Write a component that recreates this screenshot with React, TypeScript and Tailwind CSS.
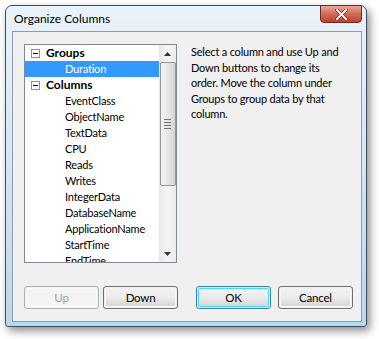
import React from "react";

const font = { fontFamily: '"Segoe UI", Lato, "Noto Sans", sans-serif' };

const items = [
  "EventClass",
  "ObjectName",
  "TextData",
  "CPU",
  "Reads",
  "Writes",
  "IntegerData",
  "DatabaseName",
  "ApplicationName",
  "StartTime",
  "EndTime",
];

function Expander() {
  return (
    <div className="w-[9px] h-[9px] shrink-0 border border-[#919191] bg-white flex items-center justify-center">
      <div className="w-[5px] h-px bg-black" />
    </div>
  );
}

function Btn({ label, disabled, def }: { label: string; disabled?: boolean; def?: boolean }) {
  return (
    <div
      className={`w-[75px] h-[23px] rounded-[3px] border ${
        disabled ? "border-[#adb2b5]" : def ? "border-[#3c7fb1]" : "border-[#707070]"
      } p-px`}
    >
      <div
        className={`w-full h-full rounded-[2px] flex items-center justify-center text-[11.5px] tracking-[-0.2px] ${
          disabled ? "text-[#a0a0a0] bg-[#f4f4f4]" : "text-black bg-gradient-to-b from-[#f2f2f2] via-[#ebebeb] to-[#d6d6d6]"
        } ${def ? "border border-[#48d8fb]" : "border border-[#fcfcfc]/70"}`}
      >
        {label}
      </div>
    </div>
  );
}

export default function App() {
  return (
    <div className="w-[379px] h-[339px] bg-white relative overflow-hidden" style={font}>
      <div className="ml-[5px] mt-[5px] w-[362px] h-[322px] rounded-t-[7px] rounded-b-[3px] border border-[#3d4f62] bg-gradient-to-b from-[#eaf2f9] via-[#d4e5f3] to-[#bcd6ec] shadow-[3px_4px_8px_rgba(0,0,0,0.45)] flex flex-col relative">
        <div className="h-[25px] flex items-center pl-[8px] text-[12px] text-black">
          Organize Columns
        </div>
        <div className="absolute right-[4px] top-[-1px] w-[42px] h-[18px] rounded-b-[4px] border border-[#6d2b22] bg-gradient-to-b from-[#e6a99c] via-[#d26a56] to-[#c0412b] flex items-center justify-center">
          <svg width="13" height="11" viewBox="0 0 13 11">
            <path d="M2 1 L11 10 M11 1 L2 10" stroke="#5a1a12" strokeWidth="3.2" strokeLinecap="square" />
            <path d="M2 1 L11 10 M11 1 L2 10" stroke="#ffffff" strokeWidth="2" strokeLinecap="square" />
          </svg>
        </div>
        <div className="ml-[6px] mr-[4px] mb-[4px] flex-1 border border-[#8c9cae] bg-[#f0f0f0] relative flex flex-col shadow-[0_1px_0_#a8dcf3]">
          <div className="flex pt-[12px] pl-[11px]">
            <div className="w-[153px] h-[219px] border border-[#828790] bg-white flex overflow-hidden">
              <div className="flex-1 flex flex-col text-[11px] tracking-[-0.2px] text-black overflow-hidden">
                <div className="h-[16px] shrink-0 flex items-center pl-[6px] gap-[6px]">
                  <Expander />
                  <span className="font-bold text-[12px] tracking-normal">Groups</span>
                </div>
                <div className="h-[16px] shrink-0 flex items-center pl-[40px] bg-[#3399ff] text-white">Duration</div>
                <div className="h-[16px] shrink-0 flex items-center pl-[6px] gap-[6px]">
                  <Expander />
                  <span className="font-bold text-[12px] tracking-normal">Columns</span>
                </div>
                {items.map((t) => (
                  <div key={t} className="h-[16px] shrink-0 flex items-center pl-[40px]">
                    {t}
                  </div>
                ))}
              </div>
              <div className="w-[17px] h-full shrink-0 bg-gradient-to-r from-[#e8e8e8] via-[#f4f4f4] to-[#ececec] flex flex-col items-center">
                <div className="h-[17px] w-full flex items-center justify-center">
                  <svg width="7" height="4" viewBox="0 0 7 4"><path d="M0 4 L3.5 0 L7 4 Z" fill="#333" /></svg>
                </div>
                <div className="w-[16px] h-[124px] rounded-[2px] border border-[#959595] bg-gradient-to-r from-[#f3f3f3] via-[#e6e6e6] to-[#d4d4d4] flex flex-col items-center justify-center gap-[2px]">
                  <div className="w-[7px] h-px bg-[#6f6f6f]" />
                  <div className="w-[7px] h-px bg-[#6f6f6f]" />
                  <div className="w-[7px] h-px bg-[#6f6f6f]" />
                  <div className="w-[7px] h-px bg-[#6f6f6f]" />
                </div>
                <div className="flex-1" />
                <div className="h-[17px] w-full flex items-center justify-center">
                  <svg width="7" height="4" viewBox="0 0 7 4"><path d="M0 0 L3.5 4 L7 0 Z" fill="#333" /></svg>
                </div>
              </div>
            </div>
            <div className="ml-[14px] w-[150px] text-[11px] tracking-[-0.2px] leading-[15.6px] text-black">
              Select a column and use Up and Down buttons to change its order. Move the column under Groups to group data by that column.
            </div>
          </div>
          <div className="flex pl-[11px] mt-[23px]">
            <div className="flex gap-[4px]">
              <Btn label="Up" disabled />
              <Btn label="Down" />
            </div>
            <div className="flex gap-[7px] ml-[18px]">
              <Btn label="OK" def />
              <Btn label="Cancel" />
            </div>
          </div>
        </div>
      </div>
    </div>
  );
}
